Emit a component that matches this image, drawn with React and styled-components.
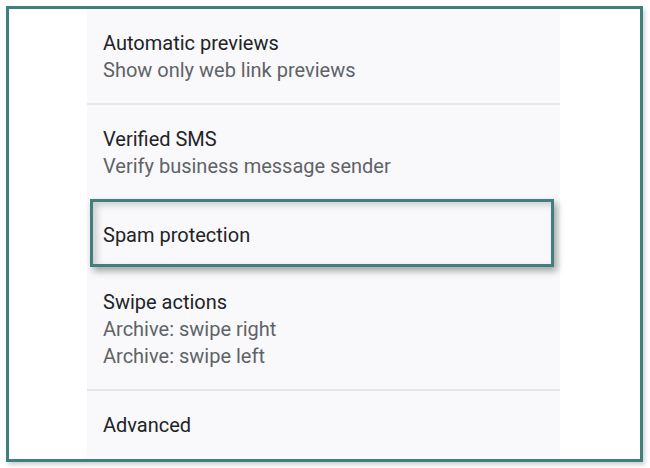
import React from "react";
import styled, { createGlobalStyle } from "styled-components";

const GlobalStyle = createGlobalStyle`
  html, body {
    margin: 0;
    padding: 0;
    background: #ffffff;
  }
  body {
    font-family: Roboto, "Noto Sans", Arial, sans-serif;
    -webkit-font-smoothing: antialiased;
  }
`;

const settings = [
  { title: "Automatic previews", lines: ["Show only web link previews"], divider: true },
  { title: "Verified SMS", lines: ["Verify business message sender"] },
  { title: "Spam protection", lines: [], highlighted: true },
  { title: "Swipe actions", lines: ["Archive: swipe right", "Archive: swipe left"], divider: true },
  { title: "Advanced", lines: [] },
];

function App() {
  return (
    <>
      <GlobalStyle />
      <Page>
        <Frame>
          <Panel>
            {settings.map((item, index) => (
              <Row key={index} $divider={item.divider} $highlighted={item.highlighted}>
                <Title>{item.title}</Title>
                {item.lines.map((line, i) => (
                  <Subtitle key={i}>{line}</Subtitle>
                ))}
              </Row>
            ))}
          </Panel>
        </Frame>
      </Page>
    </>
  );
}

const Page = styled.div`
  width: 650px;
  height: 468px;
  padding: 6px 7px 6px 6px;
  box-sizing: border-box;
`;

const Frame = styled.div`
  height: 100%;
  box-sizing: border-box;
  border: 3px solid #3f7f7c;
  background: #ffffff;
  box-shadow: 2px 3px 4px rgba(0, 0, 0, 0.18);
  display: flex;
  overflow: hidden;
`;

const Panel = styled.div`
  margin-left: 78px;
  width: 473px;
  background: #f9f9fb;
  display: flex;
  flex-direction: column;
`;

const Row = styled.div`
  display: flex;
  flex-direction: column;
  padding: 21px 16px 19px;
  border-bottom: ${(p) => (p.$divider ? "2px solid #e6e6e9" : "none")};

  ${(p) =>
    p.$highlighted &&
    `
    margin: 0 6px 0 3px;
    padding: 20px 13px 15px 10px;
    border: 3px solid #3f7f7c;
    box-shadow: 3px 4px 7px rgba(0, 0, 0, 0.35),
      inset 4px 3px 7px rgba(0, 0, 0, 0.18);
  `}

  &:nth-child(2) {
    padding-bottom: 20px;
  }
  &:nth-child(4) {
    padding-top: 22px;
    padding-bottom: 20px;
  }
  &:nth-child(5) {
    padding-top: 21px;
  }
`;

const Title = styled.div`
  font-size: 20px;
  line-height: 27px;
  color: #222326;
`;

const Subtitle = styled.div`
  font-size: 20px;
  line-height: 26.5px;
  color: #5f6368;
`;

export default App;
